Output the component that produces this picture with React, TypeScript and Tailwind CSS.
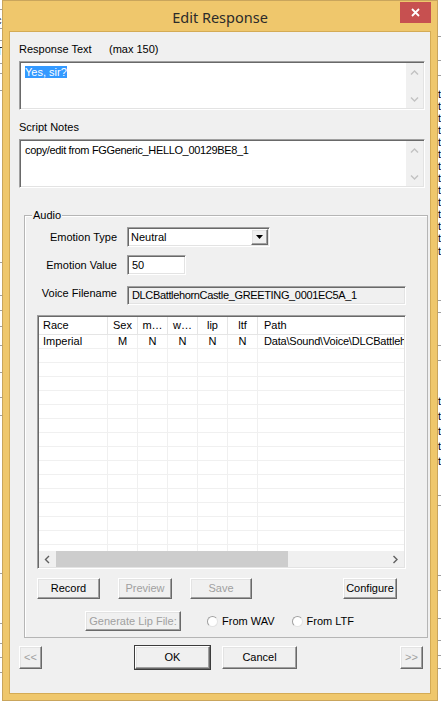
import React from "react";

const sunken =
  "border border-t-[#a0a0a0] border-l-[#a0a0a0] border-r-white border-b-white shadow-[inset_1px_1px_0_#696969,inset_-1px_-1px_0_#e3e3e3]";
const raised =
  "border border-t-white border-l-white border-r-[#696969] border-b-[#696969] shadow-[inset_-1px_-1px_0_#a0a0a0,inset_1px_1px_0_#e3e3e3] bg-[#f0f0f0]";

type Dir = "up" | "down" | "left" | "right";

function Chevron({ dir, color }: { dir: Dir; color: string }) {
  const vertical = dir === "up" || dir === "down";
  const pts: Record<Dir, string> = {
    up: "1,5.5 4.5,2 8,5.5",
    down: "1,1.5 4.5,5 8,1.5",
    left: "5,1 1.5,4.5 5,8",
    right: "1.5,1 5,4.5 1.5,8",
  };
  return (
    <svg
      width={vertical ? 9 : 7}
      height={vertical ? 7 : 9}
      viewBox={vertical ? "0 0 9 7" : "0 0 7 9"}
      className="block"
    >
      <polyline points={pts[dir]} fill="none" stroke={color} strokeWidth="1.4" />
    </svg>
  );
}

function VScroll() {
  return (
    <div className="flex w-[17px] flex-col items-center justify-between bg-[#f0f0f0] pb-[5px] pt-[6px]">
      <Chevron dir="up" color="#c2c2c2" />
      <Chevron dir="down" color="#c2c2c2" />
    </div>
  );
}

function Btn({
  children,
  w,
  h = "h-[21px]",
  disabled,
  def,
  extra = "",
}: {
  children: React.ReactNode;
  w: string;
  h?: string;
  disabled?: boolean;
  def?: boolean;
  extra?: string;
}) {
  return (
    <div
      className={`${w} ${h} ${extra} shrink-0 ${
        def ? "outline outline-1 outline-[#3c3c3c]" : ""
      } ${raised} flex items-center justify-center leading-[13px] ${
        disabled ? "text-[#a0a0a0]" : "text-black"
      }`}
    >
      {children}
    </div>
  );
}

function Radio({ label }: { label: string }) {
  return (
    <div className="flex items-center">
      <div className="h-[11px] w-[11px] rounded-full border border-t-[#a0a0a0] border-l-[#a0a0a0] border-r-[#e3e3e3] border-b-[#e3e3e3] bg-white" />
      <span className="ml-[4px] leading-[13px]">{label}</span>
    </div>
  );
}

const cols = [
  { name: "Race", w: "w-[69px]", align: "justify-start pl-[4px]" },
  { name: "Sex", w: "w-[30px]", align: "justify-center" },
  { name: "m…", w: "w-[30px]", align: "justify-center" },
  { name: "w…", w: "w-[30px]", align: "justify-center" },
  { name: "lip", w: "w-[30px]", align: "justify-center" },
  { name: "ltf", w: "w-[30px]", align: "justify-center" },
  { name: "Path", w: "flex-1", align: "justify-start pl-[6px]" },
];

const row1 = ["Imperial", "M", "N", "N", "N", "N", "Data\\Sound\\Voice\\DLCBattlehornCastle"];

function ListView() {
  const rows = Array.from({ length: 16 }, (_, i) => i);
  return (
    <div className={`ml-[12px] mt-[10px] flex h-[254px] w-[369px] flex-col ${sunken} bg-white p-[1px]`}>
      <div className="flex h-[18px] shrink-0 border-b border-[#e5e5e5] bg-white">
        {cols.map((c, i) => (
          <div
            key={c.name}
            className={`${c.w} flex items-center ${c.align} ${
              i < cols.length - 1 ? "border-r border-[#e5e5e5]" : ""
            } overflow-hidden whitespace-nowrap leading-[13px]`}
          >
            {c.name}
          </div>
        ))}
      </div>
      <div className="min-h-0 flex-1 overflow-hidden">
        {rows.map((r) => (
          <div key={r} className="flex h-[14px] border-b border-[#f0f0f0]">
            {cols.map((c, i) => (
              <div
                key={c.name}
                className={`${c.w} flex items-center ${c.align} ${
                  i < cols.length - 1 ? "border-r border-[#f0f0f0]" : ""
                } overflow-hidden whitespace-nowrap leading-[13px] ${i === 6 ? "tracking-[-0.2px]" : ""}`}
              >
                {r === 0 ? row1[i] : ""}
              </div>
            ))}
          </div>
        ))}
      </div>
      <div className="flex h-[16px] shrink-0 items-center bg-[#f0f0f0]">
        <div className="flex w-[17px] items-center justify-center">
          <Chevron dir="left" color="#606060" />
        </div>
        <div className="h-[16px] w-[232px] bg-[#cdcdcd]" />
        <div className="flex-1" />
        <div className="flex w-[17px] items-center justify-center">
          <Chevron dir="right" color="#606060" />
        </div>
      </div>
    </div>
  );
}

function Background() {
  const leftLines = [9, 28, 40, 63, 73, 90, 262, 295, 310, 326, 345, 372, 397, 415, 573, 623, 643, 657, 672];
  const rightLines = [36, 60, 75, 300, 312, 345, 360, 495, 505, 575, 590, 618, 640, 655, 668];
  const rightT = [88, 100, 112, 124, 136, 148, 160, 172, 184, 196, 208, 220, 232, 245, 395, 410, 425, 440, 455];
  const leftT = [
    { y: 14, c: "c" },
    { y: 45, c: "T" },
    { y: 96, c: "r" },
    { y: 122, c: "r" },
    { y: 503, c: "t" },
    { y: 515, c: "l" },
    { y: 527, c: "ı" },
    { y: 545, c: "(" },
  ];
  return (
    <div className="absolute inset-0 bg-white">
      {leftLines.map((y) => (
        <div key={"l" + y} className="absolute left-0 h-px w-[3px] bg-[#a0a0a0]" style={{ top: y }} />
      ))}
      {rightLines.map((y) => (
        <div key={"r" + y} className="absolute right-0 h-px w-[4px] bg-[#a0a0a0]" style={{ top: y }} />
      ))}
      {rightT.map((y) => (
        <div key={"t" + y} className="absolute left-[438px] text-[11px] leading-[12px] text-black" style={{ top: y }}>
          t
        </div>
      ))}
      {leftT.map((o) => (
        <div key={"c" + o.y} className="absolute left-[-4px] text-[11px] leading-[12px] text-black" style={{ top: o.y }}>
          {o.c}
        </div>
      ))}
    </div>
  );
}

export default function App() {
  return (
    <div className="relative h-[702px] w-[441px] overflow-hidden font-['Liberation_Sans',Arial,sans-serif] text-[11px] text-black">
      <Background />
      <div className="absolute left-[2px] top-0 flex h-[701px] w-[436px] flex-col border border-[#c9a55c] bg-[#efc76c] px-[6px] pb-[6px]">
        {/* title bar */}
        <div className="relative -mx-[6px] flex h-[30px] shrink-0 items-center justify-center pt-[2px]">
          <span className="font-['Noto_Sans',sans-serif] text-[14.5px] leading-[18px] text-[#2b2b2b]">
            Edit Response
          </span>
          <div className="absolute right-[6px] top-[1px] flex h-[21px] w-[31px] items-center justify-center bg-[#c75050]">
            <svg width="9" height="9" viewBox="0 0 9 9">
              <path d="M1 1 L8 8 M8 1 L1 8" stroke="white" strokeWidth="1.8" />
            </svg>
          </div>
        </div>

        {/* client */}
        <div className="flex flex-1 flex-col border border-[#d4ab55] bg-[#f0f0f0]">
          <div className="ml-[9px] mt-[11px] flex h-[13px] items-center leading-[13px]">
            <span className="w-[90px]">Response Text</span>
            <span>(max 150)</span>
          </div>
          <div className={`ml-[9px] mt-[5px] flex h-[49px] w-[406px] ${sunken} bg-white p-[1px]`}>
            <div className="flex-1 pl-[4px] pt-[1px]">
              <span className="bg-[#3399ff] leading-[13px] text-white">Yes, sir?</span>
            </div>
            <VScroll />
          </div>

          <div className="ml-[9px] mt-[11px] h-[13px] leading-[13px]">Script Notes</div>
          <div className={`ml-[9px] mt-[5px] flex h-[49px] w-[406px] ${sunken} bg-white p-[1px]`}>
            <div className="flex-1 pl-[4px] pt-[3px] leading-[13px] tracking-[-0.35px]">
              copy/edit from FGGeneric_HELLO_00129BE8_1
            </div>
            <VScroll />
          </div>

          {/* Audio group */}
          <div className="relative ml-[14px] mt-[27px] flex h-[423px] w-[404px] flex-col border border-[#b5b5b5] shadow-[inset_1px_1px_0_#ffffff]">
            <div className="absolute left-[7px] top-[-7px] bg-[#f0f0f0] px-[1px] leading-[13px]">Audio</div>

            <div className="mt-[11px] flex items-center">
              <div className="w-[92px] text-right leading-[13px]">Emotion Type</div>
              <div className={`ml-[10px] flex h-[20px] w-[143px] ${sunken} bg-white p-[1px]`}>
                <div className="flex flex-1 items-center pl-[2px] leading-[13px]">Neutral</div>
                <div className={`flex w-[17px] items-center justify-center ${raised}`}>
                  <svg width="7" height="4" viewBox="0 0 7 4">
                    <path d="M0 0 L7 0 L3.5 4 Z" fill="black" />
                  </svg>
                </div>
              </div>
            </div>

            <div className="mt-[8px] flex items-center">
              <div className="w-[92px] text-right leading-[13px]">Emotion Value</div>
              <div className={`ml-[10px] flex h-[20px] w-[59px] items-center ${sunken} bg-white pl-[4px] leading-[13px]`}>
                50
              </div>
            </div>

            <div className="mt-[11px] flex items-center">
              <div className="w-[92px] pb-[5px] text-right leading-[13px]">Voice Filename</div>
              <div
                className={`ml-[10px] flex h-[19px] w-[279px] items-center ${sunken} bg-[#f0f0f0] pl-[4px] leading-[13px] tracking-[-0.35px]`}
              >
                DLCBattlehornCastle_GREETING_0001EC5A_1
              </div>
            </div>

            <ListView />

            <div className="ml-[12px] mt-[9px] flex">
              <Btn w="w-[63px]">Record</Btn>
              <Btn w="w-[54px]" disabled extra="ml-[18px]">
                Preview
              </Btn>
              <Btn w="w-[62px]" disabled extra="ml-[18px]">
                Save
              </Btn>
              <Btn w="w-[54px]" extra="ml-[91px]">
                Configure
              </Btn>
            </div>

            <div className="ml-[60px] mt-[12px] flex items-center">
              <Btn w="w-[96px]" h="h-[20px]" disabled>
                Generate Lip File:
              </Btn>
              <div className="ml-[26px]">
                <Radio label="From WAV" />
              </div>
              <div className="ml-[17px]">
                <Radio label="From LTF" />
              </div>
            </div>
          </div>

          {/* bottom buttons */}
          <div className="ml-[9px] mt-[8px] flex">
            <Btn w="w-[23px]" h="h-[23px]" disabled>
              {"<<"}
            </Btn>
            <Btn w="w-[75px]" h="h-[23px]" def extra="ml-[93px]">
              OK
            </Btn>
            <Btn w="w-[75px]" h="h-[23px]" extra="ml-[12px]">
              Cancel
            </Btn>
            <Btn w="w-[23px]" h="h-[23px]" disabled extra="ml-[103px]">
              {">>"}
            </Btn>
          </div>
        </div>
      </div>
    </div>
  );
}
